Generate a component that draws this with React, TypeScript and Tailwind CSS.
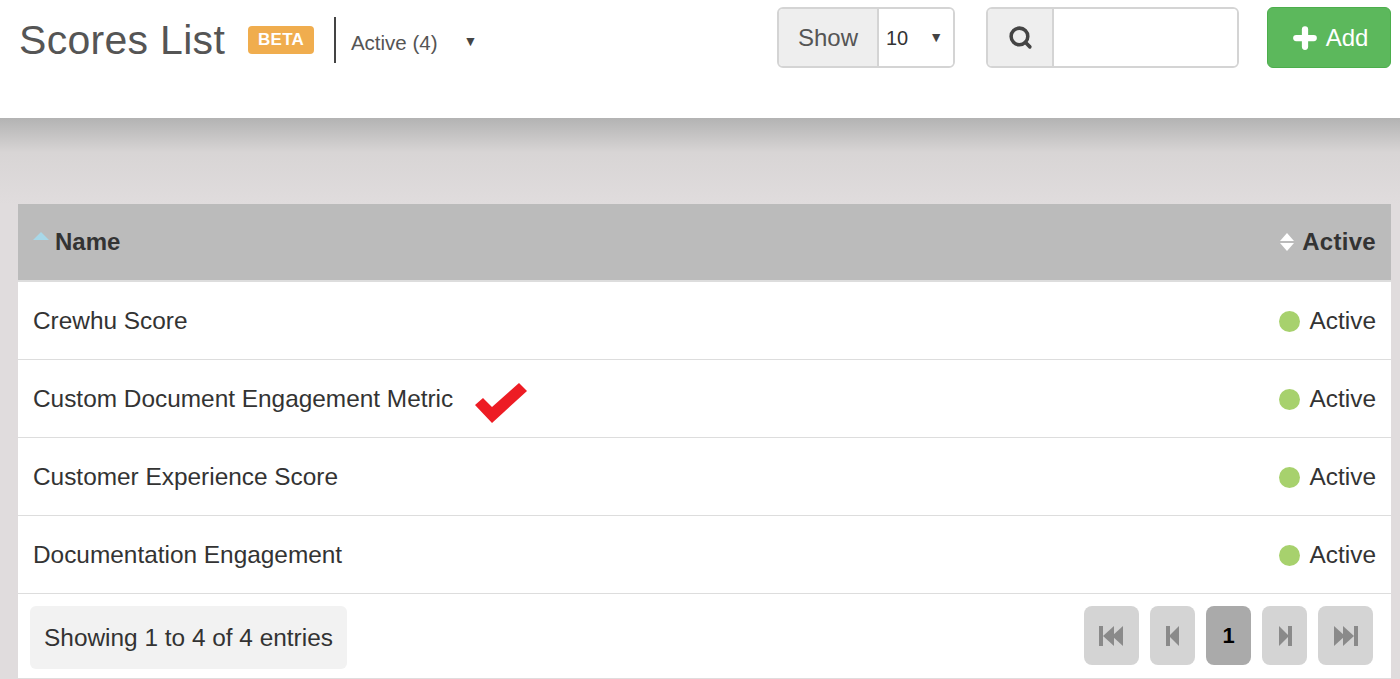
import { Plus, Search } from "lucide-react"

const rows = [
  "Crewhu Score",
  "Custom Document Engagement Metric",
  "Customer Experience Score",
  "Documentation Engagement",
]

function PageBtn({ children, active, wide }: { children: React.ReactNode; active?: boolean; wide?: boolean }) {
  return (
    <div
      className={`h-[59px] ${wide ? "w-[55px]" : "w-[45px]"} rounded-lg flex items-center justify-center ${
        active ? "bg-[#aaaaaa] text-black" : "bg-[#d4d4d4] text-[#8a8a8a]"
      }`}
    >
      {children}
    </div>
  )
}

export default function App() {
  return (
    <div className="w-[1400px] h-[679px] overflow-hidden bg-[#e0dcdd] font-['Liberation_Sans',Arial,sans-serif]">
      {/* Top bar */}
      <header className="h-[118px] bg-white flex items-start">
        <div className="flex items-center pl-[19px] pt-[17px]">
          <h1 className="text-[41px] leading-[40px] text-[#555] tracking-[0.3px]">Scores List</h1>
          <span className="ml-[23px] h-[28px] px-[10px] rounded bg-[#f0ad4e] text-white font-bold text-[17px] flex items-center tracking-[0.2px]">
            BETA
          </span>
          <div className="ml-[20px] w-[2px] h-[46px] bg-[#444]" />
          <div className="ml-[15px] text-[20.5px] text-[#555] pt-[6px]">Active (4)</div>
          <span className="ml-[26px] text-[14px] text-[#444] pt-[2px]">▼</span>
        </div>

        <div className="ml-auto flex items-start pt-[7px] pr-[9px]">
          <div className="flex h-[61px] border-2 border-[#d4d4d4] rounded-md overflow-hidden">
            <div className="w-[100px] bg-[#eeeeee] border-r-2 border-[#d4d4d4] flex items-center justify-center text-[24px] text-[#555]">
              Show
            </div>
            <div className="w-[74px] bg-white flex items-center pl-[7px] text-[20px] text-[#333]">
              10
              <span className="ml-auto mr-[10px] text-[14px] text-[#444]">▼</span>
            </div>
          </div>

          <div className="ml-[31px] flex h-[61px] border-2 border-[#d4d4d4] rounded-md overflow-hidden">
            <div className="w-[66px] bg-[#eeeeee] border-r-2 border-[#d4d4d4] flex items-center justify-center text-[#444]">
              <Search size={25} strokeWidth={3.4} />
            </div>
            <div className="w-[183px] bg-white" />
          </div>

          <button className="ml-[28px] w-[124px] h-[61px] rounded-md bg-[#5cb85c] border border-[#4cae4c] flex items-center justify-center gap-[6px] text-white text-[24px]">
            <Plus size={30} strokeWidth={5} />
            Add
          </button>
        </div>
      </header>

      {/* Shadow band */}
      <div className="h-[86px] bg-gradient-to-b from-[#b3b3b3] via-[#d8d5d5] via-40% to-[#e0dcdd]" />

      {/* Table */}
      <div className="ml-[18px] w-[1373px] bg-white">
        <div className="h-[78px] bg-[#bbbbbb] border-b-2 border-[#dddddd] flex items-center px-[15px] text-[24px] font-bold text-[#333]">
          <svg width="16" height="10" viewBox="0 0 16 10" className="mr-[6px] -mt-[12px]">
            <polygon points="0,9 8,1 16,9" fill="#a8d8e8" />
          </svg>
          Name
          <div className="ml-auto flex items-center">
            <svg width="16" height="22" viewBox="0 0 16 22" className="mr-[7px]">
              <polygon points="1,10 8,2 15,10" fill="#ffffff" />
              <polygon points="1,12 8,20 15,12" fill="#ffffff" />
            </svg>
            <span className="tracking-[0.3px]">Active</span>
          </div>
        </div>

        {rows.map((r, i) => (
          <div
            key={r}
            className="h-[78px] border-b border-[#dddddd] flex items-center px-[15px] pt-[2px] text-[24.4px] text-[#333]"
          >
            <span>{r}</span>
            {i === 1 && (
              <svg width="54" height="42" viewBox="0 0 54 42" className="ml-[22px] mt-[8px]">
                <polygon points="0,22 8,15 17,24 44,0 52,8 17,40" fill="#ed1c24" />
              </svg>
            )}
            <div className="ml-auto flex items-center gap-[10px]">
              <span className="w-[21px] h-[21px] rounded-full bg-[#a7d16d]" />
              Active
            </div>
          </div>
        ))}

        <div className="h-[84px] flex items-start justify-between pl-[12px] pr-[18px] pt-[12px]">
          <div className="h-[63px] w-[317px] bg-[#f2f2f2] rounded-md flex items-center justify-center pt-[2px] text-[24.4px] text-[#333]">
            Showing 1 to 4 of 4 entries
          </div>
          <div className="flex gap-[11px]">
            <PageBtn wide>
              <svg width="26" height="20" viewBox="0 0 26 20">
                <rect x="0" y="0" width="4" height="20" fill="currentColor" />
                <polygon points="4,10 15,0 15,20" fill="currentColor" />
                <polygon points="13,10 24,0 24,20" fill="currentColor" />
              </svg>
            </PageBtn>
            <PageBtn>
              <svg width="14" height="20" viewBox="0 0 14 20">
                <rect x="0" y="0" width="4" height="20" fill="currentColor" />
                <polygon points="3,10 13,0 13,20" fill="currentColor" />
              </svg>
            </PageBtn>
            <PageBtn active>
              <span className="text-[22px] font-bold">1</span>
            </PageBtn>
            <PageBtn>
              <svg width="14" height="20" viewBox="0 0 14 20">
                <polygon points="1,0 11,10 1,20" fill="currentColor" />
                <rect x="10" y="0" width="4" height="20" fill="currentColor" />
              </svg>
            </PageBtn>
            <PageBtn wide>
              <svg width="26" height="20" viewBox="0 0 26 20">
                <polygon points="1,0 12,10 1,20" fill="currentColor" />
                <polygon points="10,0 21,10 10,20" fill="currentColor" />
                <rect x="21" y="0" width="4" height="20" fill="currentColor" />
              </svg>
            </PageBtn>
          </div>
        </div>
      </div>
    </div>
  )
}
